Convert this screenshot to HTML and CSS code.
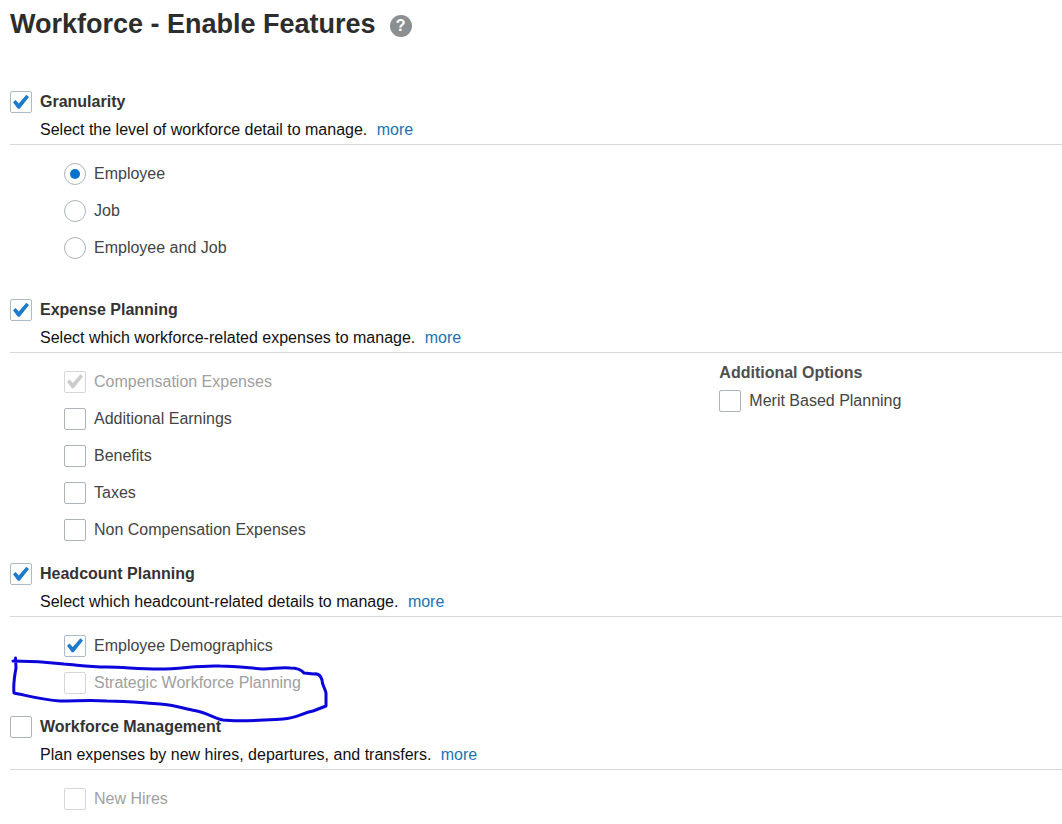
FILE: index.html
```
<!DOCTYPE html>
<html lang="en">

<head>
    <meta charset="utf-8">
    <title>Workforce - Enable Features</title>
    <meta name="viewport" content="initial-scale=1.0, width=device-width">
    <link rel="stylesheet" href="styles.css">
</head>

<body>
    <header>
        <h1>Workforce - Enable Features</h1>
        <button class="help" type="button" aria-label="Help">?</button>
    </header>
    <form>
        <section class="feature spaced">
            <h2><label><input type="checkbox" checked> Granularity</label></h2>
            <p>Select the level of workforce detail to manage. <a href="#">more</a></p>
            <div class="options">
                <label><input type="radio" name="granularity" checked> Employee</label>
                <label><input type="radio" name="granularity"> Job</label>
                <label><input type="radio" name="granularity"> Employee and Job</label>
            </div>
        </section>

        <section class="feature">
            <h2><label><input type="checkbox" checked> Expense Planning</label></h2>
            <p>Select which workforce-related expenses to manage. <a href="#">more</a></p>
            <div class="columns">
                <div class="options">
                    <label class="disabled"><input type="checkbox" checked disabled> Compensation Expenses</label>
                    <label><input type="checkbox"> Additional Earnings</label>
                    <label><input type="checkbox"> Benefits</label>
                    <label><input type="checkbox"> Taxes</label>
                    <label><input type="checkbox"> Non Compensation Expenses</label>
                </div>
                <div class="additional">
                    <h3>Additional Options</h3>
                    <label><input type="checkbox"> Merit Based Planning</label>
                </div>
            </div>
        </section>

        <section class="feature">
            <h2><label><input type="checkbox" checked> Headcount Planning</label></h2>
            <p>Select which headcount-related details to manage. <a href="#">more</a></p>
            <div class="options">
                <label><input type="checkbox" checked> Employee Demographics</label>
                <label class="disabled"><input type="checkbox" disabled> Strategic Workforce Planning</label>
            </div>
            <!-- pen mark around Strategic Workforce Planning -->
            <svg class="mark" width="320" height="74" viewBox="10 652 320 74" aria-hidden="true">
                <path d="M15.500 658L16 668Q13 684 14 693C29 696 43 700 60 701C77 701 91 700 107 701C128 701 143 703 160 704C176 705 184 709 197 711C207 713 214 718 223 720C239 722 265 720 283 719C297 718 302 713 313 711L326 706L326 693C325 688 322 685 322 680Q320 673 314 674L304 673C301 669 297 668 290 668C281 667 273 669 263 669C249 668 235 666 220 666C199 665 181 669 160 669C137 669 124 667 107 667C88 667 78 665 64 664C47 662 31 661 13 661" />
            </svg>
        </section>

        <section class="feature">
            <h2><label><input type="checkbox"> Workforce Management</label></h2>
            <p>Plan expenses by new hires, departures, and transfers. <a href="#">more</a></p>
            <div class="options">
                <label class="disabled"><input type="checkbox" disabled> New Hires</label>
            </div>
        </section>
    </form>
</body>

</html>
```
FILE: styles.css
```
body {
    margin: 0 0 0 10px;
    background: #fff;
    color: #444;
    font-family: "Liberation Sans", Arial, sans-serif;
    font-size: 16px;
    line-height: 28px;
}

header {
    display: flex;
    align-items: center;
    gap: 14px;
    height: 52px;
    margin-bottom: 36px;
}

h1, h2, h3, p {
    margin: 0;
}

h1 {
    padding-bottom: 4px;
    color: #2d2d2d;
    font-size: 27px;
    line-height: 32px;
}

h2, h3 {
    font-size: 16px;
}

h2 {
    color: #333;
}

h3 {
    color: #4f4f4f;
}

.help {
    width: 22px;
    height: 22px;
    padding: 0;
    border: none;
    border-radius: 50%;
    background: #8b8f92;
    color: #fff;
    font: bold 16px/22px "Liberation Sans", Arial, sans-serif;
}

.feature {
    position: relative;
    margin-bottom: 12px;
}

.spaced {
    margin-bottom: 30px;
}

.feature p {
    padding-left: 30px;
    border-bottom: 1px solid #d6d9db;
    color: #111;
}

a {
    margin-left: 5px;
    color: #1b73b3;
    text-decoration: none;
}

label {
    display: flex;
    align-items: center;
    gap: 8px;
}

.options {
    padding: 10px 0 0 54px;
}

.options label {
    height: 37px;
}

.columns {
    display: grid;
    grid-template-columns: 2fr 1fr;
}

.additional {
    padding: 6px 0 0 8px;
}

.disabled {
    color: #a0a0a0;
}

input {
    appearance: none;
    position: relative;
    flex: none;
    box-sizing: border-box;
    width: 22px;
    height: 22px;
    margin: 0;
    border: 1px solid #adb3b9;
    border-radius: 2px;
    background: #fff;
}

input[type=checkbox]:checked {
    border-color: #a9bccb;
}

input[type=radio] {
    border-radius: 50%;
}

input:disabled,
input[type=checkbox]:checked:disabled {
    border-color: #d6d6d6;
}

input:checked::before {
    content: "";
    position: absolute;
    inset: 2px;
    background: #1c7bcd;
    clip-path: polygon(0 52%, 16% 38%, 36% 60%, 84% 4%, 100% 19%, 42% 92%, 30% 92%);
}

input:checked:disabled::before {
    background: #ccc;
}

input[type=radio]:checked::before {
    inset: 5px;
    border-radius: 50%;
    background: #0572ce;
    clip-path: none;
}

.mark {
    position: absolute;
    top: 92px;
    left: 0;
    pointer-events: none;
}

.mark path {
    fill: none;
    stroke: #0b05dc;
    stroke-width: 3;
    stroke-linecap: round;
    stroke-linejoin: round;
}
```
